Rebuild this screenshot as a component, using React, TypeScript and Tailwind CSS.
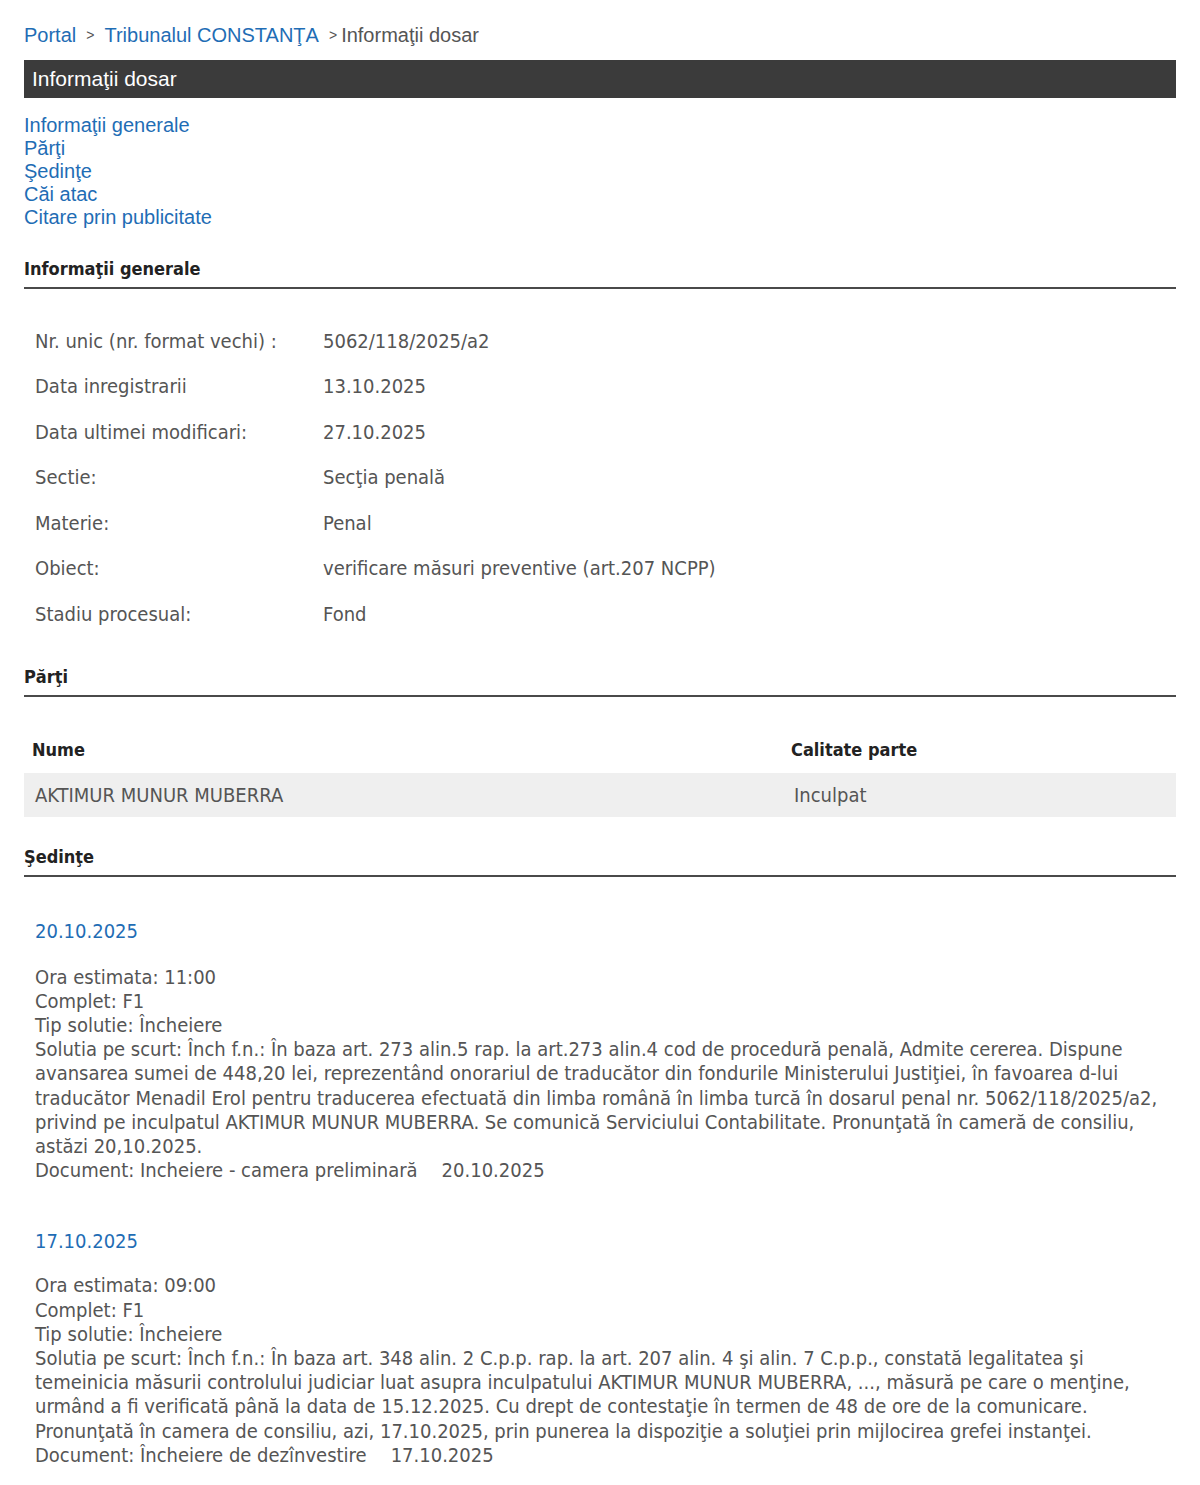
import React from 'react';

const info: [string, string][] = [
  ['Nr. unic (nr. format vechi) :', '5062/118/2025/a2'],
  ['Data inregistrarii', '13.10.2025'],
  ['Data ultimei modificari:', '27.10.2025'],
  ['Sectie:', 'Secţia penală'],
  ['Materie:', 'Penal'],
  ['Obiect:', 'verificare măsuri preventive (art.207 NCPP)'],
  ['Stadiu procesual:', 'Fond'],
];

type Sedinta = {
  data: string;
  ora: string;
  complet: string;
  tip: string;
  solutie: string[];
  document: string;
  dataDocument: string;
};

const sedinte: Sedinta[] = [
  {
    data: '20.10.2025',
    ora: '11:00',
    complet: 'F1',
    tip: 'Încheiere',
    solutie: [
      'Solutia pe scurt: Înch f.n.: În baza art. 273 alin.5 rap. la art.273 alin.4 cod de procedură penală, Admite cererea. Dispune',
      'avansarea sumei de 448,20 lei, reprezentând onorariul de traducător din fondurile Ministerului Justiţiei, în favoarea d-lui',
      'traducător Menadil Erol pentru traducerea efectuată din limba română în limba turcă în dosarul penal nr. 5062/118/2025/a2,',
      'privind pe inculpatul AKTIMUR MUNUR MUBERRA. Se comunică Serviciului Contabilitate. Pronunţată în cameră de consiliu,',
      'astăzi 20,10.2025.',
    ],
    document: 'Incheiere - camera preliminară',
    dataDocument: '20.10.2025',
  },
  {
    data: '17.10.2025',
    ora: '09:00',
    complet: 'F1',
    tip: 'Încheiere',
    solutie: [
      'Solutia pe scurt: Înch f.n.: În baza art. 348 alin. 2 C.p.p. rap. la art. 207 alin. 4 şi alin. 7 C.p.p., constată legalitatea şi',
      'temeinicia măsurii controlului judiciar luat asupra inculpatului AKTIMUR MUNUR MUBERRA, ..., măsură pe care o menţine,',
      'urmând a fi verificată până la data de 15.12.2025. Cu drept de contestaţie în termen de 48 de ore de la comunicare.',
      'Pronunţată în camera de consiliu, azi, 17.10.2025, prin punerea la dispoziţie a soluţiei prin mijlocirea grefei instanţei.',
    ],
    document: 'Încheiere de dezînvestire',
    dataDocument: '17.10.2025',
  },
];

const arial = "font-['Liberation_Sans',Arial,sans-serif]";
const tahoma = "font-['DejaVu_Sans_Condensed','DejaVu_Sans',sans-serif]";

function SectionTitle({ children }: { children: React.ReactNode }) {
  return (
    <h3
      className={`${tahoma} mt-[28px] border-b-2 border-[#4a4a4a] pb-[6px] text-[18px] leading-[24px] font-bold text-[#222]`}
    >
      {children}
    </h3>
  );
}

export default function App() {
  return (
    <div className="min-h-[1485px] bg-white px-[24px] pt-[23px]">
      {/* breadcrumb */}
      <div className={`${arial} flex items-center gap-[10px] text-[20px] leading-[24px] text-[#555]`}>
        <a className="text-[#1f6db5]">Portal</a>
        <span className="text-[14px]">&gt;</span>
        <a className="text-[#1f6db5]">Tribunalul CONSTANŢA</a>
        <span className="text-[14px]">&gt;</span>
        <span className="-ml-[6px]">Informaţii dosar</span>
      </div>

      <div className={`${arial} mt-[13px] flex h-[38px] items-center bg-[#3b3b3b] px-[8px] text-[21px] text-white`}>
        Informaţii dosar
      </div>

      <nav className={`${arial} mt-[16px] flex flex-col text-[20px] leading-[23px] text-[#1f6db5]`}>
        <a>Informaţii generale</a>
        <a>Părţi</a>
        <a>Şedinţe</a>
        <a>Căi atac</a>
        <a>Citare prin publicitate</a>
      </nav>

      <SectionTitle>Informaţii generale</SectionTitle>
      <table className={`${tahoma} mt-[29px] w-full text-[20px] text-[#555]`}>
        <tbody>
          {info.map(([label, value]) => (
            <tr key={label} className="h-[45.5px]">
              <td className="w-[299px] pl-[11px]">{label}</td>
              <td>{value}</td>
            </tr>
          ))}
        </tbody>
      </table>

      <SectionTitle>Părţi</SectionTitle>
      <table className={`${tahoma} mt-[30px] w-full text-[20px] text-[#555]`}>
        <thead>
          <tr className="h-[46px] text-left text-[18px] text-[#222]">
            <th className="w-[767px] pl-[8px] font-bold">Nume</th>
            <th className="font-bold">Calitate parte</th>
          </tr>
        </thead>
        <tbody>
          <tr className="h-[44px] bg-[#efefef]">
            <td className="pl-[11px]">AKTIMUR MUNUR MUBERRA</td>
            <td className="pl-[3px]">Inculpat</td>
          </tr>
        </tbody>
      </table>

      <SectionTitle>Şedinţe</SectionTitle>
      <div className={`${tahoma} pl-[11px] text-[20px] text-[#555]`}>
        {sedinte.map((s, i) => (
          <div key={s.data} className={i === 0 ? 'mt-[42px]' : 'mt-[47px]'}>
            <div className="leading-[24px] text-[#1f6db5]">{s.data}</div>
            <div className={`${i === 0 ? 'mt-[22px]' : 'mt-[20px]'} leading-[24.2px] whitespace-nowrap`}>
              <div>Ora estimata: {s.ora}</div>
              <div>Complet: {s.complet}</div>
              <div>Tip solutie: {s.tip}</div>
              {s.solutie.map((line) => (
                <div key={line}>{line}</div>
              ))}
              <div>
                Document: {s.document}
                <span className="ml-[24px]">{s.dataDocument}</span>
              </div>
            </div>
          </div>
        ))}
      </div>
    </div>
  );
}
